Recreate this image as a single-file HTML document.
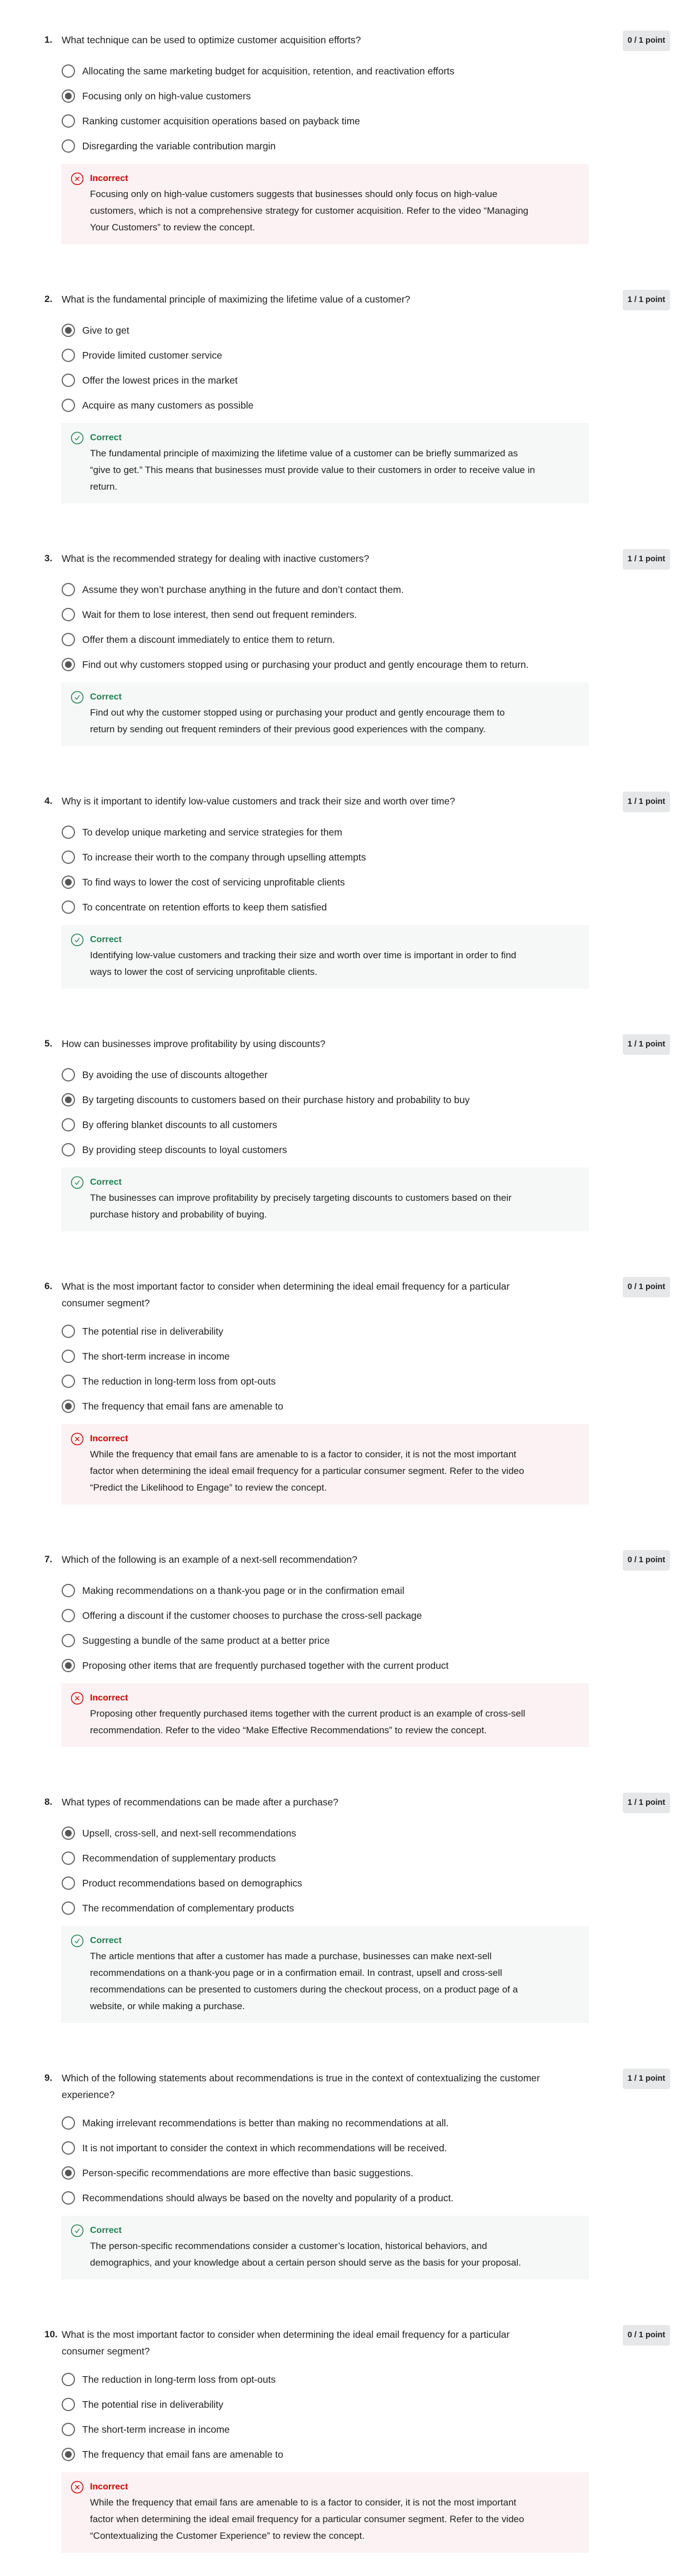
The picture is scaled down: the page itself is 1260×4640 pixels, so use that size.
<!DOCTYPE html>
<html><head><meta charset="utf-8"><style>
*{margin:0;padding:0;box-sizing:border-box}
body{width:1260px;height:4640px;background:#fff;font-family:"Liberation Sans",Arial,sans-serif;color:#1f1f1f;overflow:hidden}
.wrap{padding-top:55px}
.q{position:relative;margin-bottom:82px}
.hd{position:relative;min-height:37px;padding-left:111px;padding-right:200px}
.num{position:absolute;left:80px;top:2px;font-weight:bold;font-size:17px;line-height:30px}
.qt{padding-top:2px;font-size:17.5px;line-height:30px;white-space:nowrap}
.badge{position:absolute;left:1121px;top:0;width:85px;height:37px;background:#e5e7e8;border-radius:4px;font-weight:bold;font-size:14.5px;line-height:37px;text-align:center;color:#1f1f1f}
.opts{margin-top:14px}
.o{height:45px;position:relative;padding-left:148px;font-size:17.5px;line-height:45px;white-space:nowrap}
.o:before{content:"";position:absolute;left:111px;top:10px;width:24px;height:24px;border:2px solid #636363;border-radius:50%;box-sizing:border-box}
.o.s:after{content:"";position:absolute;left:117px;top:16px;width:12px;height:12px;border-radius:50%;background:#555}
.fb{margin-top:9px;margin-left:110px;width:950px;padding:15px 0 15px 0}
.fb.bad{background:#fcf2f3}
.fb.good{background:#f5f8f7}
.tt{height:24px;line-height:24px;padding-left:52px;font-weight:bold;font-size:16px;position:relative}
.bad .tt{color:#d30001}
.good .tt{color:#1e8050}
.tt svg{position:absolute;left:17px;top:0}
.bd{padding-left:52px;font-size:17px;line-height:30px;margin-top:1px;white-space:nowrap}
</style></head><body><div class="wrap">

<div class="q"><div class="hd"><span class="num">1.</span><div class="qt">What technique can be used to optimize customer acquisition efforts?</div><div class="badge">0 / 1 point</div></div>
<div class="opts"><div class="o">Allocating the same marketing budget for acquisition, retention, and reactivation efforts</div><div class="o s">Focusing only on high-value customers</div><div class="o">Ranking customer acquisition operations based on payback time</div><div class="o">Disregarding the variable contribution margin</div></div>
<div class="fb bad"><div class="tt"><svg width="24" height="24" viewBox="0 0 24 24"><circle cx="12" cy="12" r="10.5" fill="none" stroke="#d30001" stroke-width="1.5"/><path d="M8.5 8.5L15.5 15.5M15.5 8.5L8.5 15.5" stroke="#d30001" stroke-width="1.3"/></svg>Incorrect</div><div class="bd">Focusing only on high-value customers suggests that businesses should only focus on high-value<br>customers, which is not a comprehensive strategy for customer acquisition. Refer to the video “Managing<br>Your Customers” to review the concept.</div></div></div>

<div class="q"><div class="hd"><span class="num">2.</span><div class="qt">What is the fundamental principle of maximizing the lifetime value of a customer?</div><div class="badge">1 / 1 point</div></div>
<div class="opts"><div class="o s">Give to get</div><div class="o">Provide limited customer service</div><div class="o">Offer the lowest prices in the market</div><div class="o">Acquire as many customers as possible</div></div>
<div class="fb good"><div class="tt"><svg width="24" height="24" viewBox="0 0 24 24"><circle cx="12" cy="12" r="10.5" fill="none" stroke="#1e8050" stroke-width="1.5"/><path d="M8 12.5L11 15.5L16 8.5" fill="none" stroke="#1e8050" stroke-width="1.3"/></svg>Correct</div><div class="bd">The fundamental principle of maximizing the lifetime value of a customer can be briefly summarized as<br>“give to get.” This means that businesses must provide value to their customers in order to receive value in<br>return.</div></div></div>

<div class="q"><div class="hd"><span class="num">3.</span><div class="qt">What is the recommended strategy for dealing with inactive customers?</div><div class="badge">1 / 1 point</div></div>
<div class="opts"><div class="o">Assume they won’t purchase anything in the future and don’t contact them.</div><div class="o">Wait for them to lose interest, then send out frequent reminders.</div><div class="o">Offer them a discount immediately to entice them to return.</div><div class="o s">Find out why customers stopped using or purchasing your product and gently encourage them to return.</div></div>
<div class="fb good"><div class="tt"><svg width="24" height="24" viewBox="0 0 24 24"><circle cx="12" cy="12" r="10.5" fill="none" stroke="#1e8050" stroke-width="1.5"/><path d="M8 12.5L11 15.5L16 8.5" fill="none" stroke="#1e8050" stroke-width="1.3"/></svg>Correct</div><div class="bd">Find out why the customer stopped using or purchasing your product and gently encourage them to<br>return by sending out frequent reminders of their previous good experiences with the company.</div></div></div>

<div class="q"><div class="hd"><span class="num">4.</span><div class="qt">Why is it important to identify low-value customers and track their size and worth over time?</div><div class="badge">1 / 1 point</div></div>
<div class="opts"><div class="o">To develop unique marketing and service strategies for them</div><div class="o">To increase their worth to the company through upselling attempts</div><div class="o s">To find ways to lower the cost of servicing unprofitable clients</div><div class="o">To concentrate on retention efforts to keep them satisfied</div></div>
<div class="fb good"><div class="tt"><svg width="24" height="24" viewBox="0 0 24 24"><circle cx="12" cy="12" r="10.5" fill="none" stroke="#1e8050" stroke-width="1.5"/><path d="M8 12.5L11 15.5L16 8.5" fill="none" stroke="#1e8050" stroke-width="1.3"/></svg>Correct</div><div class="bd">Identifying low-value customers and tracking their size and worth over time is important in order to find<br>ways to lower the cost of servicing unprofitable clients.</div></div></div>

<div class="q"><div class="hd"><span class="num">5.</span><div class="qt">How can businesses improve profitability by using discounts?</div><div class="badge">1 / 1 point</div></div>
<div class="opts"><div class="o">By avoiding the use of discounts altogether</div><div class="o s">By targeting discounts to customers based on their purchase history and probability to buy</div><div class="o">By offering blanket discounts to all customers</div><div class="o">By providing steep discounts to loyal customers</div></div>
<div class="fb good"><div class="tt"><svg width="24" height="24" viewBox="0 0 24 24"><circle cx="12" cy="12" r="10.5" fill="none" stroke="#1e8050" stroke-width="1.5"/><path d="M8 12.5L11 15.5L16 8.5" fill="none" stroke="#1e8050" stroke-width="1.3"/></svg>Correct</div><div class="bd">The businesses can improve profitability by precisely targeting discounts to customers based on their<br>purchase history and probability of buying.</div></div></div>

<div class="q"><div class="hd"><span class="num">6.</span><div class="qt">What is the most important factor to consider when determining the ideal email frequency for a particular<br>consumer segment?</div><div class="badge">0 / 1 point</div></div>
<div class="opts"><div class="o">The potential rise in deliverability</div><div class="o">The short-term increase in income</div><div class="o">The reduction in long-term loss from opt-outs</div><div class="o s">The frequency that email fans are amenable to</div></div>
<div class="fb bad"><div class="tt"><svg width="24" height="24" viewBox="0 0 24 24"><circle cx="12" cy="12" r="10.5" fill="none" stroke="#d30001" stroke-width="1.5"/><path d="M8.5 8.5L15.5 15.5M15.5 8.5L8.5 15.5" stroke="#d30001" stroke-width="1.3"/></svg>Incorrect</div><div class="bd">While the frequency that email fans are amenable to is a factor to consider, it is not the most important<br>factor when determining the ideal email frequency for a particular consumer segment. Refer to the video<br>“Predict the Likelihood to Engage” to review the concept.</div></div></div>

<div class="q"><div class="hd"><span class="num">7.</span><div class="qt">Which of the following is an example of a next-sell recommendation?</div><div class="badge">0 / 1 point</div></div>
<div class="opts"><div class="o">Making recommendations on a thank-you page or in the confirmation email</div><div class="o">Offering a discount if the customer chooses to purchase the cross-sell package</div><div class="o">Suggesting a bundle of the same product at a better price</div><div class="o s">Proposing other items that are frequently purchased together with the current product</div></div>
<div class="fb bad"><div class="tt"><svg width="24" height="24" viewBox="0 0 24 24"><circle cx="12" cy="12" r="10.5" fill="none" stroke="#d30001" stroke-width="1.5"/><path d="M8.5 8.5L15.5 15.5M15.5 8.5L8.5 15.5" stroke="#d30001" stroke-width="1.3"/></svg>Incorrect</div><div class="bd">Proposing other frequently purchased items together with the current product is an example of cross-sell<br>recommendation. Refer to the video “Make Effective Recommendations” to review the concept.</div></div></div>

<div class="q"><div class="hd"><span class="num">8.</span><div class="qt">What types of recommendations can be made after a purchase?</div><div class="badge">1 / 1 point</div></div>
<div class="opts"><div class="o s">Upsell, cross-sell, and next-sell recommendations</div><div class="o">Recommendation of supplementary products</div><div class="o">Product recommendations based on demographics</div><div class="o">The recommendation of complementary products</div></div>
<div class="fb good"><div class="tt"><svg width="24" height="24" viewBox="0 0 24 24"><circle cx="12" cy="12" r="10.5" fill="none" stroke="#1e8050" stroke-width="1.5"/><path d="M8 12.5L11 15.5L16 8.5" fill="none" stroke="#1e8050" stroke-width="1.3"/></svg>Correct</div><div class="bd">The article mentions that after a customer has made a purchase, businesses can make next-sell<br>recommendations on a thank-you page or in a confirmation email. In contrast, upsell and cross-sell<br>recommendations can be presented to customers during the checkout process, on a product page of a<br>website, or while making a purchase.</div></div></div>

<div class="q"><div class="hd"><span class="num">9.</span><div class="qt">Which of the following statements about recommendations is true in the context of contextualizing the customer<br>experience?</div><div class="badge">1 / 1 point</div></div>
<div class="opts"><div class="o">Making irrelevant recommendations is better than making no recommendations at all.</div><div class="o">It is not important to consider the context in which recommendations will be received.</div><div class="o s">Person-specific recommendations are more effective than basic suggestions.</div><div class="o">Recommendations should always be based on the novelty and popularity of a product.</div></div>
<div class="fb good"><div class="tt"><svg width="24" height="24" viewBox="0 0 24 24"><circle cx="12" cy="12" r="10.5" fill="none" stroke="#1e8050" stroke-width="1.5"/><path d="M8 12.5L11 15.5L16 8.5" fill="none" stroke="#1e8050" stroke-width="1.3"/></svg>Correct</div><div class="bd">The person-specific recommendations consider a customer’s location, historical behaviors, and<br>demographics, and your knowledge about a certain person should serve as the basis for your proposal.</div></div></div>

<div class="q"><div class="hd"><span class="num">10.</span><div class="qt">What is the most important factor to consider when determining the ideal email frequency for a particular<br>consumer segment?</div><div class="badge">0 / 1 point</div></div>
<div class="opts"><div class="o">The reduction in long-term loss from opt-outs</div><div class="o">The potential rise in deliverability</div><div class="o">The short-term increase in income</div><div class="o s">The frequency that email fans are amenable to</div></div>
<div class="fb bad"><div class="tt"><svg width="24" height="24" viewBox="0 0 24 24"><circle cx="12" cy="12" r="10.5" fill="none" stroke="#d30001" stroke-width="1.5"/><path d="M8.5 8.5L15.5 15.5M15.5 8.5L8.5 15.5" stroke="#d30001" stroke-width="1.3"/></svg>Incorrect</div><div class="bd">While the frequency that email fans are amenable to is a factor to consider, it is not the most important<br>factor when determining the ideal email frequency for a particular consumer segment. Refer to the video<br>“Contextualizing the Customer Experience” to review the concept.</div></div></div>

</div></body></html>
